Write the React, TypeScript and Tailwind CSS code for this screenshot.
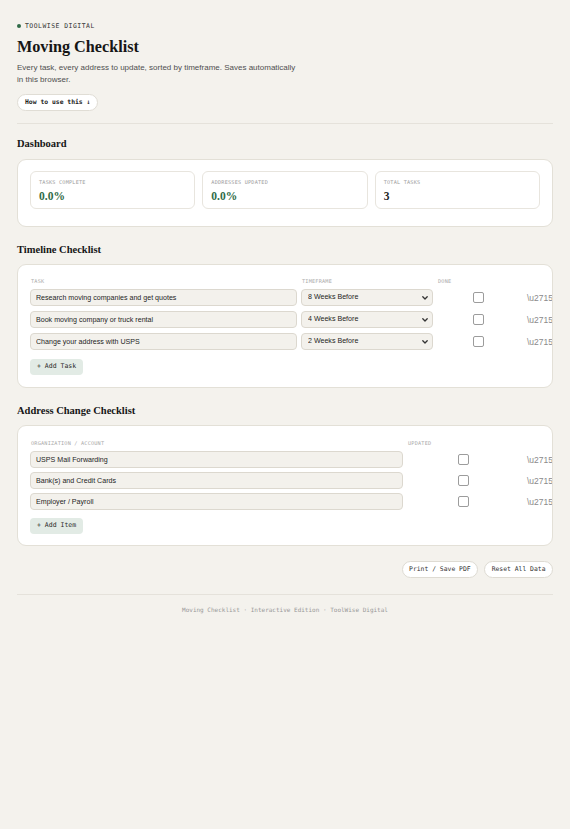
import React from "react";

const serif = "font-['Liberation_Serif',serif]";
const mono = "font-['DejaVu_Sans_Mono',monospace]";
const sans = "font-['Liberation_Sans',Arial,sans-serif]";

const tasks = [
  { t: "Research moving companies and get quotes", f: "8 Weeks Before" },
  { t: "Book moving company or truck rental", f: "4 Weeks Before" },
  { t: "Change your address with USPS", f: "2 Weeks Before" },
];
const addrs = ["USPS Mail Forwarding", "Bank(s) and Credit Cards", "Employer / Payroll"];
const frames = ["8 Weeks Before", "6 Weeks Before", "4 Weeks Before", "2 Weeks Before", "1 Week Before", "Moving Day", "After Move"];

function Box() {
  return (
    <input
      type="checkbox"
      className="block appearance-none w-[11px] h-[11px] rounded-[2px] border border-[#9c9c9c] bg-white"
    />
  );
}

function Label({ children }: { children: React.ReactNode }) {
  return (
    <div className="font-['DejaVu_Sans_Mono',monospace] text-[5.2px] leading-[6px] tracking-[0.04em] uppercase text-[#a9a9a9] pl-[1px]">
      {children}
    </div>
  );
}

function Stat({ label, value, green }: { label: string; value: string; green?: boolean }) {
  return (
    <div className="h-[38px] rounded-[6px] border border-[#e8e5de] bg-white px-[8px] pt-[7px]">
      <div className="font-['DejaVu_Sans_Mono',monospace] text-[5.2px] leading-[6px] tracking-[0.04em] uppercase text-[#9c9c9c]">
        {label}
      </div>
      <div
        className={
          green
            ? "mt-[5px] font-['Liberation_Serif',serif] font-bold text-[11.5px] leading-[13px] text-[#2f6b47]"
            : "mt-[5px] font-['Liberation_Serif',serif] font-bold text-[11.5px] leading-[13px] text-[#1f1f1f]"
        }
      >
        {value}
      </div>
    </div>
  );
}

export default function App() {
  return (
    <div className={`min-h-screen bg-[#f4f2ed] px-[17px] pt-[22px] pb-[30px] text-[#1c1c1c] ${sans}`}>
      <div className="flex items-center gap-[4px]">
        <span className="w-[4px] h-[4px] rounded-full bg-[#2f6b47]" />
        <span className={`${mono} text-[6.4px] leading-[8px] tracking-[0.08em] text-[#333]`}>TOOLWISE DIGITAL</span>
      </div>
      <h1 className={`${serif} mt-[7px] font-bold text-[16.2px] leading-[20px] text-[#161616]`}>Moving Checklist</h1>
      <p className="mt-[5px] max-w-[285px] text-[8px] leading-[12px] text-[#4f4f4f]">
        Every task, every address to update, sorted by timeframe. Saves automatically in this browser.
      </p>
      <button
        className={`${mono} mt-[8px] h-[17px] px-[7px] rounded-full border border-[#e0ddd5] bg-white text-[6.4px] font-bold text-[#222]`}
      >
        How to use this ↓
      </button>
      <div className="mt-[12px] border-t border-[#e5e2db]" />

      <h2 className={`${serif} mt-[13px] font-bold text-[10.5px] leading-[14px] text-[#161616]`}>Dashboard</h2>
      <div className="mt-[8px] rounded-[9px] border-[1.5px] border-[#e3e0d7] bg-white px-[12px] pt-[11px] pb-[17px]">
        <div className="grid grid-cols-3 gap-[7px]">
          <Stat label="Tasks Complete" value="0.0%" green />
          <Stat label="Addresses Updated" value="0.0%" green />
          <Stat label="Total Tasks" value="3" />
        </div>
      </div>

      <h2 className={`${serif} mt-[16px] font-bold text-[10.5px] leading-[14px] text-[#161616]`}>Timeline Checklist</h2>
      <div className="mt-[7px] rounded-[9px] border-[1.5px] border-[#e3e0d7] bg-white px-[12px] pt-[13px] pb-[12px] overflow-hidden">
        <div className="grid grid-cols-[267px_132px_82px_1fr] gap-x-[4px] items-center">
          <Label>Task</Label>
          <Label>Timeframe</Label>
          <Label>Done</Label>
          <div />
        </div>
        <div className="mt-[5px] flex flex-col gap-[5px]">
          {tasks.map((r) => (
            <div key={r.t} className="grid grid-cols-[267px_132px_82px_1fr] gap-x-[4px] items-center">
              <input
                defaultValue={r.t}
                className="block h-[17px] rounded-[4px] border border-[#dcd8cf] bg-[#f3f1ec] px-[5px] text-[7.1px] text-[#1e1e1e] outline-none"
              />
              <div className="relative flex h-[17px]">
                <select
                  defaultValue={r.f}
                  className="block appearance-none w-full h-[17px] rounded-[4px] border border-[#dcd8cf] bg-[#f3f1ec] pl-[6px] pr-[12px] text-[7.1px] leading-[15px] text-[#1e1e1e] outline-none"
                >
                  {frames.map((f) => (
                    <option key={f}>{f}</option>
                  ))}
                </select>
                <svg
                  className="pointer-events-none absolute right-[5px] top-[7px]"
                  width="6"
                  height="4"
                  viewBox="0 0 6 4"
                >
                  <path d="M0.8 0.8 L3 3 L5.2 0.8" fill="none" stroke="#333" strokeWidth="1.3" strokeLinecap="round" strokeLinejoin="round" />
                </svg>
              </div>
              <div className="flex justify-center">
                <Box />
              </div>
              <div className="pl-[4px] text-[8.5px] leading-[10px] text-[#8a8a8a] whitespace-nowrap">\u2715</div>
            </div>
          ))}
        </div>
        <button className={`${mono} mt-[9px] h-[16px] px-[7px] rounded-[4px] bg-[#e2ebe5] text-[6.5px] text-[#2a2a2a]`}>
          + Add Task
        </button>
      </div>

      <h2 className={`${serif} mt-[16px] font-bold text-[10.5px] leading-[14px] text-[#161616]`}>Address Change Checklist</h2>
      <div className="mt-[7px] rounded-[9px] border-[1.5px] border-[#e3e0d7] bg-white px-[12px] pt-[14px] pb-[11px] overflow-hidden">
        <div className="grid grid-cols-[373px_112px_1fr] gap-x-[4px] items-center">
          <Label>Organization / Account</Label>
          <Label>Updated</Label>
          <div />
        </div>
        <div className="mt-[5px] flex flex-col gap-[4px]">
          {addrs.map((a) => (
            <div key={a} className="grid grid-cols-[373px_112px_1fr] gap-x-[4px] items-center">
              <input
                defaultValue={a}
                className="block h-[17px] rounded-[4px] border border-[#dcd8cf] bg-[#f3f1ec] px-[5px] text-[7.1px] text-[#1e1e1e] outline-none"
              />
              <div className="flex justify-center">
                <Box />
              </div>
              <div className="pl-[4px] text-[8.5px] leading-[10px] text-[#8a8a8a] whitespace-nowrap">\u2715</div>
            </div>
          ))}
        </div>
        <button className={`${mono} mt-[7px] h-[16px] px-[7px] rounded-[4px] bg-[#e2ebe5] text-[6.5px] text-[#2a2a2a]`}>
          + Add Item
        </button>
      </div>

      <div className="mt-[15px] flex justify-end gap-[6px]">
        <button className={`${mono} h-[17px] px-[6.5px] rounded-full border border-[#dedbd3] bg-white text-[6.4px] text-[#333]`}>
          Print / Save PDF
        </button>
        <button className={`${mono} h-[17px] px-[6.5px] rounded-full border border-[#dedbd3] bg-white text-[6.4px] text-[#333]`}>
          Reset All Data
        </button>
      </div>
      <div className="mt-[16px] border-t border-[#e5e2db]" />
      <p className={`${mono} mt-[11px] text-center text-[6px] leading-[8px] text-[#999]`}>
        Moving Checklist · Interactive Edition · ToolWise Digital
      </p>
    </div>
  );
}
